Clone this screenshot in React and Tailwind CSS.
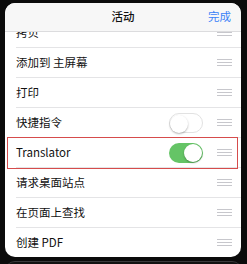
import React from "react";

const font = { fontFamily: '"Noto Sans CJK SC", "Noto Sans", sans-serif' };

function Handle() {
  return (
    <div className="flex w-[15px] flex-col gap-[2px]">
      <div className="h-px bg-[#c7c7cc]" />
      <div className="h-px bg-[#c7c7cc]" />
      <div className="h-px bg-[#c7c7cc]" />
    </div>
  );
}

function Toggle({ on }) {
  return (
    <div
      className={
        "relative h-[20px] w-[34px] rounded-full " +
        (on ? "bg-[#65c466]" : "bg-white border border-[#e2e2e2]")
      }
    >
      <div
        className={
          "absolute top-[1px] h-[18px] w-[18px] rounded-full bg-white shadow-[0_1px_2px_rgba(0,0,0,0.3)] " +
          (on ? "right-[1px]" : "left-[0px] top-[0px]")
        }
      />
    </div>
  );
}

function Row({ label, toggle, highlight }) {
  return (
    <div className="relative flex h-[30px] items-center pl-[11px]">
      <div className="flex h-full flex-1 items-center border-b border-[#e4e4e6] pr-[9px]">
        <span className="flex-1 text-[11.5px] text-[#111]">{label}</span>
        {toggle !== undefined && (
          <div className="mr-[14px]">
            <Toggle on={toggle} />
          </div>
        )}
        <Handle />
      </div>
      {highlight && (
        <div className="pointer-events-none absolute -top-[1px] -bottom-[1px] left-[2px] right-[3px] border-[1.5px] border-[#d64c4c]" />
      )}
    </div>
  );
}

export default function App() {
  const rows = [
    { label: "拷贝" },
    { label: "添加到 主屏幕" },
    { label: "打印" },
    { label: "快捷指令", toggle: false },
    { label: "Translator", toggle: true, highlight: true },
    { label: "请求桌面站点" },
    { label: "在页面上查找" },
    { label: "创建 PDF" },
  ];
  return (
    <div className="h-[264px] w-[247px] overflow-hidden bg-[#0b0b0b] pt-[3px]" style={font}>
      <div className="mx-[5px] flex h-[254px] w-[236px] flex-col overflow-hidden rounded-[10px] bg-white">
        <div className="relative z-10 flex h-[29px] shrink-0 items-center justify-center border-b border-[#dcdcde] bg-[#f7f7f7]">
          <span className="text-[11.5px] font-medium text-[#111]">活动</span>
          <span className="absolute right-[10px] text-[11.5px] text-[#3a82f7]">完成</span>
        </div>
        <div className="-mt-[14px] flex flex-col">
          {rows.map((r) => (
            <Row key={r.label} {...r} />
          ))}
        </div>
      </div>
      <div className="mx-[5px] mt-[4px] h-[10px] rounded-t-[10px] border-t border-[#3a3a3c] bg-[#111]" />
    </div>
  );
}
